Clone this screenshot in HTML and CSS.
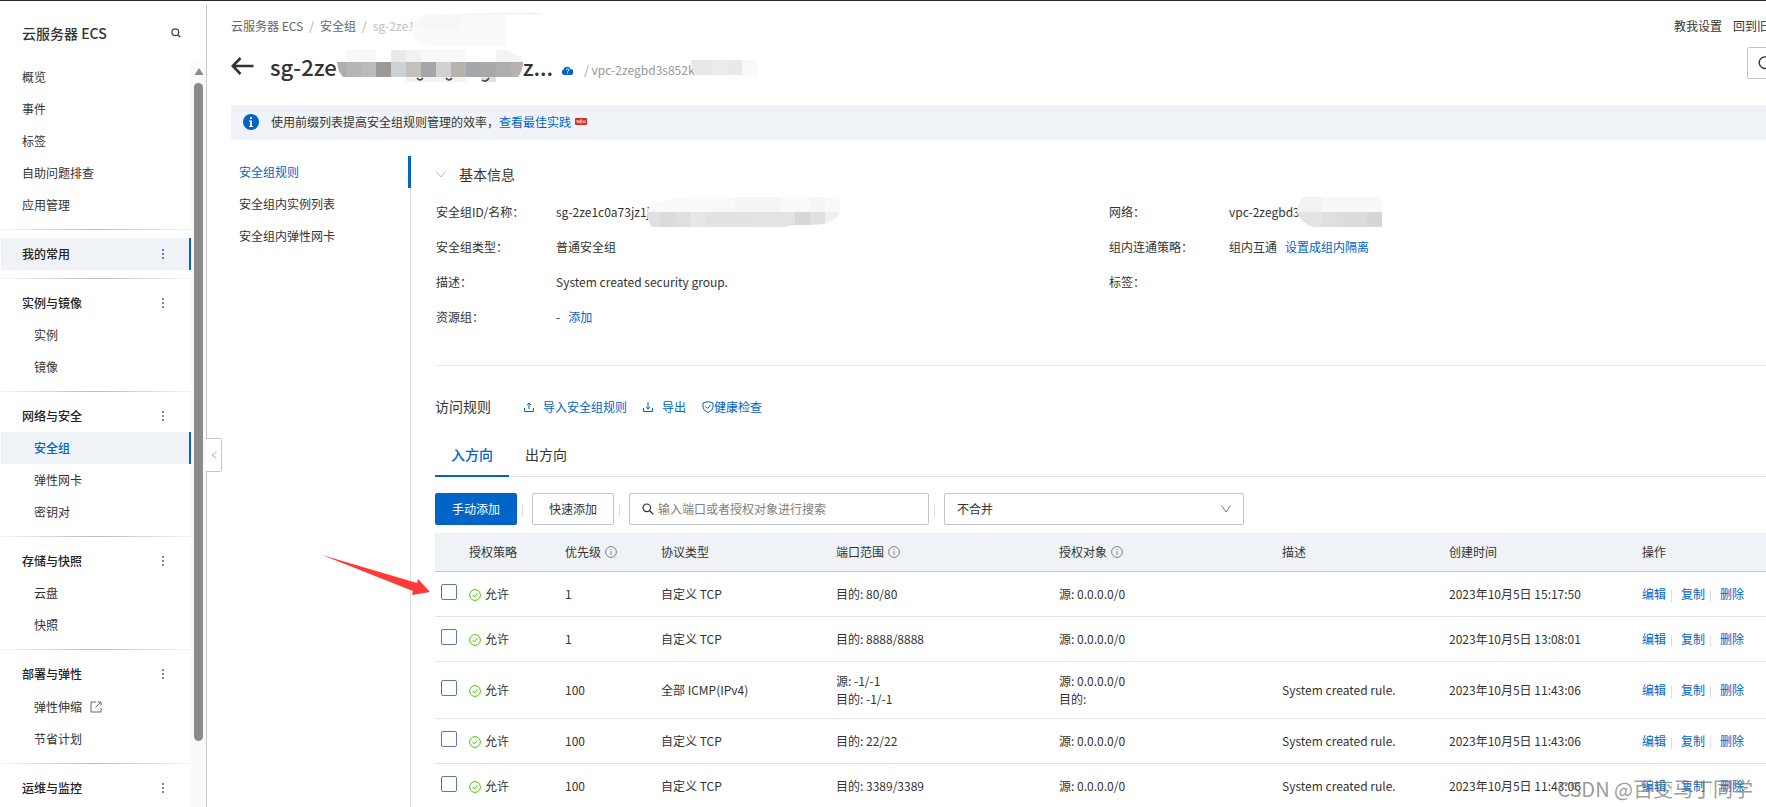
FILE: index.html
```html
<!DOCTYPE html>
<html lang="zh-CN">
<head>
<meta charset="utf-8">
<title>云服务器 ECS - 安全组</title>
<link rel="stylesheet" href="styles.css">
</head>
<body>
<svg class="defs" aria-hidden="true">
  <symbol id="i-info" viewBox="0 0 12 12"><circle cx="6" cy="6" r="5.4" fill="none" stroke="#808080"/><path d="M6 5v4M6 3v1" stroke="#808080" fill="none"/></symbol>
  <symbol id="i-ok" viewBox="0 0 12 12"><circle cx="6" cy="6" r="5.4" fill="#f6fff0" stroke="#52c41a"/><path d="M3.6 6l1.8 1.9 3-3.6" fill="none" stroke="#52c41a"/></symbol>
  <symbol id="i-more" viewBox="0 0 4 12"><path d="M1 1h2v2H1zM1 5h2v2H1zM1 9h2v2H1z" fill="currentColor"/></symbol>
</svg>
<div class="app">
  <aside class="sidebar">
    <header class="side-head">
      <h2>云服务器 ECS</h2>
      <button class="icon-btn" aria-label="搜索"><svg width="10" height="10" viewBox="0 0 10 10"><circle cx="4.3" cy="4.3" r="3.4" fill="none" stroke="#444" stroke-width="1.2"/><path d="M7 7l2.2 2.2" stroke="#444" stroke-width="1.3"/></svg></button>
    </header>
    <div class="side-body">
      <nav class="menu">
        <section class="group">
          <a class="item" href="#">概览</a>
          <a class="item" href="#">事件</a>
          <a class="item" href="#">标签</a>
          <a class="item" href="#">自助问题排查</a>
          <a class="item" href="#">应用管理</a>
        </section>
        <section class="group">
          <a class="item head fav" href="#">我的常用<svg width="4" height="12"><use href="#i-more"/></svg></a>
        </section>
        <section class="group">
          <a class="item head" href="#">实例与镜像<svg width="4" height="12"><use href="#i-more"/></svg></a>
          <a class="item sub" href="#">实例</a>
          <a class="item sub" href="#">镜像</a>
        </section>
        <section class="group">
          <a class="item head" href="#">网络与安全<svg width="4" height="12"><use href="#i-more"/></svg></a>
          <a class="item sub current" href="#">安全组</a>
          <a class="item sub" href="#">弹性网卡</a>
          <a class="item sub" href="#">密钥对</a>
        </section>
        <section class="group">
          <a class="item head" href="#">存储与快照<svg width="4" height="12"><use href="#i-more"/></svg></a>
          <a class="item sub" href="#">云盘</a>
          <a class="item sub" href="#">快照</a>
        </section>
        <section class="group">
          <a class="item head" href="#">部署与弹性<svg width="4" height="12"><use href="#i-more"/></svg></a>
          <a class="item sub external" href="#">弹性伸缩<svg width="12" height="12" viewBox="0 0 12 12" fill="none" stroke="#666"><path d="M6 1H1v10h10V7M5.500 6.500L10.500 1.500M7.500 1h3.500v3.500"/></svg></a>
          <a class="item sub" href="#">节省计划</a>
        </section>
        <section class="group">
          <a class="item head" href="#">运维与监控<svg width="4" height="12"><use href="#i-more"/></svg></a>
        </section>
      </nav>
      <div class="scrollbar"><svg width="10" height="7" viewBox="0 0 10 7"><path d="M5 0l4.500 7h-9z" fill="#8b8b8b"/></svg><div class="thumb"></div></div>
    </div>
    <button class="collapse" aria-label="收起"><svg width="6" height="8" viewBox="0 0 6 8"><path d="M5.500 .5L1 4l4.500 3.500" fill="none" stroke="#aaa"/></svg></button>
  </aside>

  <main class="main">
    <div class="page">
      <div class="topline">
        <nav class="crumbs"><a href="#">云服务器 ECS</a><i>/</i><a href="#">安全组</a><i>/</i><span>sg-2ze1</span><svg class="mask-crumb" width="140" height="36" viewBox="0 0 140 36"><path d="M0 18Q4 3 20 3H95V33H20Q4 33 0 18z" fill="#fafafa"/><path d="M4 18Q8 3 20 3H50V18z" fill="#f7f7f7"/><path d="M20 3Q80 0 125 0L134 3z" fill="#f6f6f6"/></svg></nav>
        <nav class="links"><a href="#">教我设置</a><a href="#">回到旧版</a></nav>
      </div>
      <div class="title-row">
        <button class="icon-btn back" aria-label="返回"><svg width="23" height="18" viewBox="0 0 23 18"><path d="M22.500 9H2M9.500 1L1.700 9l7.800 8" fill="none" stroke="#333" stroke-width="2.600"/></svg></button>
        <h1>sg-2ze<svg class="mask-title" width="186" height="36" viewBox="0 0 186 36">
          <path d="M9 16V4H24Q30 2 39 4V16z" fill="#f8f8f8"/><path d="M54 4h15v12H54z" fill="#e9e9e9"/><path d="M69 4h15v12H69z" fill="#f1f1ef"/><path d="M84 4h45v12H84z" fill="#f8f8fa"/><path d="M159 16V4Q180 4 186 16z" fill="#f3f3f3"/>
          <path d="M0 16h9v15H6Q1 26 0 16z" fill="#adadae"/><path d="M9 16h15v15H9z" fill="#b5b5b5"/><path d="M24 16h15v15H24z" fill="#bbb"/><path d="M39 16h15v15H39z" fill="#9b9a98"/><path d="M54 16h15v15H54z" fill="#cdd1d5"/><path d="M69 16h15v15H69z" fill="#c4c0ba"/><path d="M84 16h15v15H84z" fill="#a4a6ac"/><path d="M99 16h15v15H99z" fill="#cfd1d0"/><path d="M114 16h15v15H114z" fill="#b6b2ac"/><path d="M129 16h15v15H129z" fill="#a4a8ac"/><path d="M144 16h15v15H144z" fill="#a8a9ab"/><path d="M159 16h15v15H159z" fill="#aeaeae"/><path d="M174 16h12q0 9-5 15h-7z" fill="#b5b2b0"/>
          <path d="M69 31h60v5H69z" fill="#f3f3f3"/><path d="M144 31h15v5H144z" fill="#e2e2e2"/><path d="M80 32q3 4 6 0M109 32q3 4 6 0M145 34q4 3 7-2" fill="none" stroke="#444" stroke-width="1.500"/></svg>z...</h1>
        <svg class="cloud" width="12" height="9" viewBox="0 0 12 9"><path d="M3 9a3 3 0 0 1-.6-5.500A3.800 3.800 0 0 1 9.500 3 3 3 0 0 1 9.500 9z" fill="#0064c8"/><path d="M5 3.500q2-1.500 3 0 0 1.500-1.500 2M6.500 6.500v1" stroke="#fff" stroke-width=".9" fill="none"/></svg>
        <span class="vpc">/ vpc-2zegbd3s852k</span><svg class="mask-vpc" width="66" height="20" viewBox="0 0 66 20"><path d="M0 0h22v15H4Q1 9 0 0z" fill="#e8e8e8"/><path d="M22 0h15v15H22z" fill="#ececec"/><path d="M37 0h14v15H37z" fill="#e9e9e9"/><path d="M51 0h15v15H51z" fill="#f8faf9"/><path d="M36 15h30v5H36z" fill="#fcfcfc"/></svg>
        <button class="refresh" aria-label="刷新"><svg width="14" height="14" viewBox="0 0 14 14"><path d="M11.500 3A5.800 5.800 0 1 0 12.500 8.500M12.500 .5v4h-4" fill="none" stroke="#333" stroke-width="1.400"/></svg></button>
      </div>
      <div class="banner">
        <svg width="16" height="16" viewBox="0 0 16 16"><circle cx="8" cy="8" r="8" fill="#0064c8"/><path d="M7 3h2v2H7zM6 6.500h3V12h1v1H6v-1h1V7.500H6z" fill="#fff"/></svg>
        <p>使用前缀列表提高安全组规则管理的效率，<a href="#">查看最佳实践</a></p>
        <svg width="12" height="7" viewBox="0 0 12 7"><rect width="12" height="7" rx="1" fill="#d93026"/><path d="M2 5V2l2 3V2M7 2H5v3h2M5 3.500h2M8 2v3l1-1 1 1V2" fill="none" stroke="#fff" stroke-width=".6"/></svg>
      </div>

      <div class="columns">
        <nav class="subnav">
          <a class="on" href="#">安全组规则</a>
          <a href="#">安全组内实例列表</a>
          <a href="#">安全组内弹性网卡</a>
        </nav>
        <div class="content">
          <h3 class="section-title"><svg width="10" height="7" viewBox="0 0 10 7"><path d="M.5 .5L5 6 9.500 .5" fill="none" stroke="#bbb"/></svg>基本信息</h3>
          <div class="info">
            <dl>
              <div><dt>安全组ID/名称：</dt><dd>sg-2ze1c0a73jz1j<svg class="mask" width="194" height="30" viewBox="0 0 194 30"><path d="M0 15Q8 1 43 0H193V15z" fill="#f9f9f9"/><path d="M88 0h45v15H88z" fill="#f4f5f6"/><path d="M163 0h15v15h-15z" fill="#f5f5f5"/><path d="M0 15h13v15H5Q0 24 0 15z" fill="#e0e0e0"/><path d="M13 15h15v15H13z" fill="#dadbdd"/><path d="M28 15h15v15H28z" fill="#dfdfdf"/><path d="M43 15h15v15H43z" fill="#e9e7e5"/><path d="M58 15h45v15H58z" fill="#e1e3e2"/><path d="M103 15h45v13l-12 2h-33z" fill="#e3e3e2"/><path d="M148 15h15v13h-15z" fill="#d9d7d5"/><path d="M163 15h15v12l-15 1z" fill="#e0e0e0"/><path d="M178 15h15q-3 9-15 11z" fill="#eff0f3"/></svg></dd></div>
              <div><dt>安全组类型：</dt><dd>普通安全组</dd></div>
              <div><dt>描述：</dt><dd>System created security group.</dd></div>
              <div><dt>资源组：</dt><dd>-<a href="#">添加</a></dd></div>
            </dl>
            <dl>
              <div><dt>网络：</dt><dd>vpc-2zegbd3<svg class="mask" width="85" height="30" viewBox="0 0 85 30"><path d="M0 15Q0 4 7 0H25V15z" fill="#f1f3f2"/><path d="M25 0h60v15H25z" fill="#f8f8f7"/><path d="M0 15h25v15H17Q4 27 0 15z" fill="#e3e5e4"/><path d="M25 15h15v15H25z" fill="#e0e0e0"/><path d="M40 15h30v15H40z" fill="#dcdcdc"/><path d="M70 15h15v15H70z" fill="#d6d6d6"/></svg></dd></div>
              <div><dt>组内连通策略：</dt><dd>组内互通<a href="#">设置成组内隔离</a></dd></div>
              <div><dt>标签：</dt><dd></dd></div>
            </dl>
          </div>
          <div class="rules-head">
            <h3>访问规则</h3>
            <a href="#"><svg class="gap" width="10" height="10" viewBox="0 0 10 10" fill="none" stroke="#0064c8"><path d="M.5 6v3.500h9V6M5 7V1M3 3l2-2 2 2"/></svg>导入安全组规则</a>
            <a href="#"><svg class="gap" width="10" height="10" viewBox="0 0 10 10" fill="none" stroke="#0064c8"><path d="M.5 6v3.500h9V6M5 0v7M3 5l2 2 2-2"/></svg>导出</a>
            <a href="#"><svg width="12" height="12" viewBox="0 0 12 12" fill="none" stroke="#0064c8"><path d="M6 .6L11 2v4Q11 9.500 6 11.500 1 9.500 1 6V2zM3.500 5.500L5.500 7.500 8.500 4"/></svg>健康检查</a>
          </div>
          <div class="tabs" role="tablist">
            <button class="tab on" role="tab" aria-selected="true">入方向</button>
            <button class="tab" role="tab" aria-selected="false">出方向</button>
          </div>
          <div class="toolbar">
            <button class="btn primary">手动添加</button>
            <i class="bar"></i>
            <button class="btn">快速添加</button>
            <i class="bar"></i>
            <label class="field search"><svg width="12" height="12" viewBox="0 0 12 12"><circle cx="4.800" cy="4.800" r="3.800" fill="none" stroke="#333" stroke-width="1.200"/><path d="M7.700 7.700l3.500 3.500" stroke="#333" stroke-width="1.300"/></svg><input type="text" aria-label="搜索规则" placeholder="输入端口或者授权对象进行搜索"></label>
            <i class="bar"></i>
            <label class="field select"><select aria-label="合并方式"><option>不合并</option></select><svg width="10" height="8" viewBox="0 0 10 8"><path d="M.5 .5L5 7 9.500 .5" fill="none" stroke="#777"/></svg></label>
          </div>
          <table class="rules">
            <colgroup><col class="c-check"><col class="c-s"><col class="c-s"><col class="c-proto"><col class="c-l"><col class="c-l"><col class="c-desc"><col class="c-time"><col class="c-act"></colgroup>
            <thead>
              <tr><th></th><th>授权策略</th><th>优先级<svg class="tip" width="12" height="12"><use href="#i-info"/></svg></th><th>协议类型</th><th>端口范围<svg class="tip" width="12" height="12"><use href="#i-info"/></svg></th><th>授权对象<svg class="tip" width="12" height="12"><use href="#i-info"/></svg></th><th>描述</th><th>创建时间</th><th>操作</th></tr>
            </thead>
            <tbody>
              <tr><td><input type="checkbox" aria-label="选择规则 80/80"></td><td><span class="ok"><svg width="12" height="12"><use href="#i-ok"/></svg>允许</span></td><td>1</td><td>自定义 TCP</td><td>目的: 80/80</td><td>源: 0.0.0.0/0</td><td></td><td>2023年10月5日 15:17:50</td><td><span class="acts"><a href="#">编辑</a><a href="#">复制</a><a href="#">删除</a></span></td></tr>
              <tr><td><input type="checkbox" aria-label="选择规则 8888/8888"></td><td><span class="ok"><svg width="12" height="12"><use href="#i-ok"/></svg>允许</span></td><td>1</td><td>自定义 TCP</td><td>目的: 8888/8888</td><td>源: 0.0.0.0/0</td><td></td><td>2023年10月5日 13:08:01</td><td><span class="acts"><a href="#">编辑</a><a href="#">复制</a><a href="#">删除</a></span></td></tr>
              <tr><td><input type="checkbox" aria-label="选择规则 -1/-1"></td><td><span class="ok"><svg width="12" height="12"><use href="#i-ok"/></svg>允许</span></td><td>100</td><td>全部 ICMP(IPv4)</td><td>源: -1/-1<br>目的: -1/-1</td><td>源: 0.0.0.0/0<br>目的:</td><td>System created rule.</td><td>2023年10月5日 11:43:06</td><td><span class="acts"><a href="#">编辑</a><a href="#">复制</a><a href="#">删除</a></span></td></tr>
              <tr><td><input type="checkbox" aria-label="选择规则 22/22"></td><td><span class="ok"><svg width="12" height="12"><use href="#i-ok"/></svg>允许</span></td><td>100</td><td>自定义 TCP</td><td>目的: 22/22</td><td>源: 0.0.0.0/0</td><td>System created rule.</td><td>2023年10月5日 11:43:06</td><td><span class="acts"><a href="#">编辑</a><a href="#">复制</a><a href="#">删除</a></span></td></tr>
              <tr><td><input type="checkbox" aria-label="选择规则 3389/3389"></td><td><span class="ok"><svg width="12" height="12"><use href="#i-ok"/></svg>允许</span></td><td>100</td><td>自定义 TCP</td><td>目的: 3389/3389</td><td>源: 0.0.0.0/0</td><td>System created rule.</td><td>2023年10月5日 11:43:06</td><td><span class="acts"><a href="#">编辑</a><a href="#">复制</a><a href="#">删除</a></span></td></tr>
            </tbody>
          </table>
        </div>
      </div>
    </div>
  </main>
  <svg class="arrow" width="108" height="42" viewBox="0 0 108 42"><path d="M0 0L95 28 96 24 108 37 90 40 91 36z" fill="#fd3a37"/></svg>
  <div class="watermark">CSDN @百变马丁同学</div>
</div>
</body>
</html>
```

FILE: styles.css
```css
* { box-sizing: border-box; }

body {
  margin: 0;
  background: #fff;
  color: #333;
  font: 12px/18px "Noto Sans CJK SC", sans-serif;
}

a { color: inherit; text-decoration: none; }
h1, h2, h3, p, dl, dd { margin: 0; font-weight: 400; }
button, input, select { font: inherit; color: inherit; }
svg { flex: none; }

.defs { position: absolute; width: 0; height: 0; }

.app {
  position: relative;
  display: flex;
  height: 100vh;
  overflow: hidden;
  border-top: 1px solid #2a2630;
}

.icon-btn { display: flex; padding: 0; border: 0; background: none; }

/* Sidebar */
.sidebar {
  position: relative;
  display: flex;
  flex: none;
  flex-direction: column;
  width: 207px;
  margin-top: 4px;
  border-right: 1px solid #c8c8c8;
}

.side-head {
  display: flex;
  flex: none;
  align-items: center;
  justify-content: space-between;
  height: 56px;
  padding: 0 25px 0 22px;
}

.side-head h2 { font-size: 14px; font-weight: 500; }

.side-body { display: flex; flex: 1; min-height: 0; overflow: hidden; }
.menu { flex: 1; padding-left: 1px; }

.group { padding-bottom: 8px; }

.group + .group::before {
  content: "";
  display: block;
  height: 1px;
  margin-bottom: 8px;
  background: linear-gradient(90deg, #f5f5f5, #bbb 50%, #f5f5f5);
}

.item {
  display: flex;
  align-items: center;
  height: 32px;
  padding-left: 21px;
  border-right: 2px solid transparent;
}

.head { justify-content: space-between; padding-right: 24px; font-weight: 500; color: #222; }
.head svg { color: #888; }
.sub { padding-left: 33px; }
.external { gap: 8px; height: 33px; }

.fav, .current { background: #eff3f8; border-right-color: #0064c8; }
.fav svg { color: #5484b8; }
.current { color: #0064c8; font-weight: 500; }

.scrollbar {
  display: flex;
  flex-direction: column;
  align-items: center;
  width: 15px;
  padding-top: 7px;
  background: #fafafa;
}

.thumb { flex: none; width: 9px; height: 89%; margin-top: 8px; border-radius: 5px; background: #8b8b8b; }

.collapse {
  position: absolute;
  top: 433px;
  left: 206px;
  display: flex;
  align-items: center;
  justify-content: center;
  width: 16px;
  height: 34px;
  padding: 0;
  border: 1px solid #c8c8c8;
  border-left: 0;
  border-radius: 0 2px 2px 0;
  background: #fff;
}

/* Page head */
.main { flex: 1; min-width: 0; overflow: hidden; }

.page {
  display: flex;
  flex-direction: column;
  min-height: 100%;
  margin-right: -17px;
  padding: 15px 0 0 24px;
}

.topline { display: flex; justify-content: space-between; height: 20px; line-height: 20px; }
.crumbs { display: flex; color: #666; }
.crumbs i { margin: 0 6px; font-style: normal; color: #aaa; }
.crumbs span { color: #c1c1c1; }
.mask-crumb { margin: -4px 0 -12px -4px; }
.links { display: flex; gap: 11px; padding-right: 2px; }

.title-row { display: flex; align-items: center; height: 38px; margin-top: 11px; }
.back { margin-right: 16px; }

.title-row h1 {
  display: flex;
  align-items: center;
  font-size: 22px;
  font-weight: 500;
  line-height: 36px;
}

.mask-title { margin-top: -4px; }
.cloud { margin: 8px 11px 0 8px; }
.vpc { padding-top: 8px; color: #999; }
.mask-vpc { margin: 8px 0 0 -4px; }

.refresh {
  display: flex;
  align-items: center;
  align-self: flex-start;
  width: 36px;
  height: 32px;
  margin-left: auto;
  padding: 0 10px;
  border: 1px solid #c0c6cc;
  border-radius: 2px;
  background: #fff;
}

.banner {
  display: flex;
  align-items: center;
  height: 35px;
  margin-top: 20px;
  padding: 0 0 2px 12px;
  background: #eff3f8;
}

.banner p { margin: 0 4px 0 12px; }
.banner a, .info a, .rules-head a, .acts a { color: #0064c8; }

/* Body columns */
.columns { display: flex; flex: 1; margin-top: 16px; }

.subnav { flex: none; width: 180px; border-right: 1px solid #dedede; }

.subnav a {
  display: flex;
  align-items: center;
  height: 32px;
  margin-right: -1px;
  padding-left: 8px;
  border-right: 3px solid transparent;
}

.subnav .on { color: #0064c8; border-color: #0064c8; }

.content { flex: 1; min-width: 0; padding-left: 24px; }

.section-title {
  display: flex;
  align-items: center;
  gap: 13px;
  height: 38px;
  padding: 0 0 2px 1px;
  font-size: 14px;
}

.info {
  display: grid;
  grid-template-columns: 1fr 1fr;
  padding-bottom: 31px;
  border-bottom: 1px solid #ececec;
}

.info dl > div { display: flex; align-items: center; height: 35px; }
.info dt { width: 120px; }
.info dl:first-child { padding-left: 1px; }
.info dd { display: flex; align-items: center; }
.info dd a { margin-left: 8px; }
.mask { margin-left: -3px; }

.rules-head { display: flex; align-items: center; gap: 16px; height: 32px; margin-top: 25px; }
.rules-head h3 { margin-right: 17px; padding-bottom: 2px; font-size: 14px; }
.rules-head a { display: flex; align-items: center; }
.rules-head .gap { margin-right: 9px; }

.tabs {
  display: flex;
  height: 44px;
  margin-top: 10px;
  border-bottom: 1px solid #e3e4e6;
}

.tab {
  height: 44px;
  padding: 0 16px;
  border: 0;
  border-bottom: 2px solid transparent;
  background: none;
  font-size: 14px;
}

.tab.on { color: #0064c8; border-color: #0064c8; font-weight: 500; }

.toolbar { display: flex; align-items: center; margin-top: 16px; }

.btn {
  width: 82px;
  height: 32px;
  padding: 0;
  border: 1px solid #c0c6cc;
  border-radius: 2px;
  background: #fff;
}

.btn.primary { border-color: #0064c8; background: #0064c8; color: #fff; }

.bar { width: 1px; height: 12px; margin: 3px 9px 0 5px; background: #dedede; }

.field {
  display: flex;
  align-items: center;
  width: 300px;
  height: 32px;
  padding: 0 12px;
  border: 1px solid #c0c6cc;
  border-radius: 2px;
}

.search input { flex: 1; min-width: 0; padding: 0 0 0 4px; border: 0; outline: 0; background: none; }
.search input::placeholder { color: #808080; opacity: 1; }
.select select { flex: 1; padding: 0; border: 0; outline: 0; background: none; appearance: none; }

/* Rules table */
.rules { width: 100%; margin-top: 8px; border-collapse: separate; border-spacing: 0; table-layout: fixed; }
.c-check { width: 34px; }
.c-s { width: 96px; }
.c-proto { width: 175px; }
.c-l { width: 223px; }
.c-desc { width: 167px; }
.c-time { width: 193px; }
.c-act { width: 141px; }

.rules th {
  height: 39px;
  padding: 0;
  border-bottom: 1px solid #c0c6cc;
  background: #eff3f8;
  font-weight: 400;
  text-align: left;
}

.rules td { height: 45px; padding: 10px 0; border-bottom: 1px solid #e3e4e6; }
.rules td:first-child { padding: 0 0 4px 6px; line-height: 0; }
.tip { margin-left: 4px; vertical-align: -1px; }

.rules input {
  width: 16px;
  height: 16px;
  margin: 0;
  border: 1px solid #5a7ba6;
  border-radius: 2px;
  appearance: none;
}

.ok { display: flex; align-items: center; gap: 4px; }
.ok svg { margin-top: 2px; }

.acts { display: flex; }
.acts a { display: flex; align-items: center; }

.acts a + a::before {
  content: "";
  width: 1px;
  height: 12px;
  margin: 3px 9px 0 5px;
  background: #dedede;
}

/* Overlays */
.arrow { position: absolute; top: 554px; left: 322px; }

.watermark {
  position: absolute;
  right: 13px;
  bottom: 3px;
  color: rgba(110, 110, 110, .7);
  font-size: 20px;
  line-height: 30px;
}
```
